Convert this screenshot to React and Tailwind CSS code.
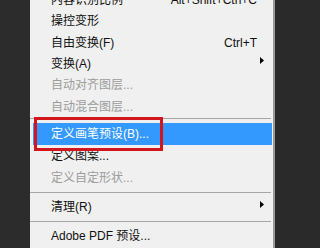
import { Fragment } from 'react';

const font = { fontFamily: '"Liberation Sans", "Noto Sans CJK SC", sans-serif' };

const items = [
  { label: '内容识别比例', shortcut: 'Alt+Shift+Ctrl+C', h: 'h-[21.3px]' },
  { label: '操控变形', h: 'h-[21.3px]' },
  { label: '自由变换(F)', shortcut: 'Ctrl+T', h: 'h-[21.3px]' },
  { label: '变换(A)', submenu: true, h: 'h-[21.3px]' },
  { label: '自动对齐图层...', disabled: true, h: 'h-[21.3px]' },
  { label: '自动混合图层...', disabled: true, h: 'h-[21.3px]' },
  { sep: true, h: 'h-[5.8px]', pt: 'pt-[1px]' },
  { label: '定义画笔预设(B)...', active: true, h: 'h-[22px]' },
  { label: '定义图案...', h: 'h-[23px]' },
  { label: '定义自定形状...', disabled: true, h: 'h-[20px]' },
  { sep: true, h: 'h-[9px]', pt: 'pt-[4px]' },
  { label: '清理(R)', submenu: true, h: 'h-[21px]' },
  { sep: true, h: 'h-[7px]', pt: 'pt-[3px]' },
  { label: 'Adobe PDF 预设...', h: 'h-[23px]' },
];

const Arrow = ({ color }) => (
  <svg width="4" height="7" viewBox="0 0 4 7" className="absolute right-[9px] top-[4px]">
    <path d="M0 0 L4 3.5 L0 7 Z" fill={color} />
  </svg>
);

const MenuRow = ({ item }) => {
  if (item.sep) {
    return (
      <div className={`${item.h} ${item.pt} shrink-0`}>
        <div className="mr-[2px] h-px bg-[#a6a6a6]" />
      </div>
    );
  }
  const text = item.active ? 'text-white' : item.disabled ? 'text-[#9c9c9c]' : 'text-[#111]';
  const box = item.active ? 'bg-[#3399ff] ml-[3px] mr-[1px] pl-[18px]' : 'pl-[21px]';
  return (
    <div className={`${item.h} ${box} shrink-0 relative flex items-center pr-[16px] text-[12px] ${text}`}>
      <span className="whitespace-nowrap">{item.label}</span>
      {item.shortcut && <span className="ml-auto whitespace-nowrap">{item.shortcut}</span>}
      {item.submenu && <Arrow color={item.active ? '#fff' : '#000'} />}
    </div>
  );
};

export default function App() {
  return (
    <div className="w-[320px] h-[248px] overflow-hidden flex bg-[#2a2a2a]" style={font}>
      <div className="w-[30px] shrink-0 bg-[#2c2c2c]" />
      <div className="relative w-[245px] shrink-0 bg-[#f0f0f0] border-r-2 border-[#9a9a9a]">
        <div className="-mt-[10.6px] flex flex-col">
          {items.map((item, i) => (
            <Fragment key={i}>
              <MenuRow item={item} />
            </Fragment>
          ))}
        </div>
        {/* red annotation box */}
        <div className="absolute left-[4px] top-[117px] w-[129px] h-[34px] border-[3px] border-[#d3161d]" />
      </div>
      <div className="flex-1 bg-[#2a2a2a]" />
    </div>
  );
}
